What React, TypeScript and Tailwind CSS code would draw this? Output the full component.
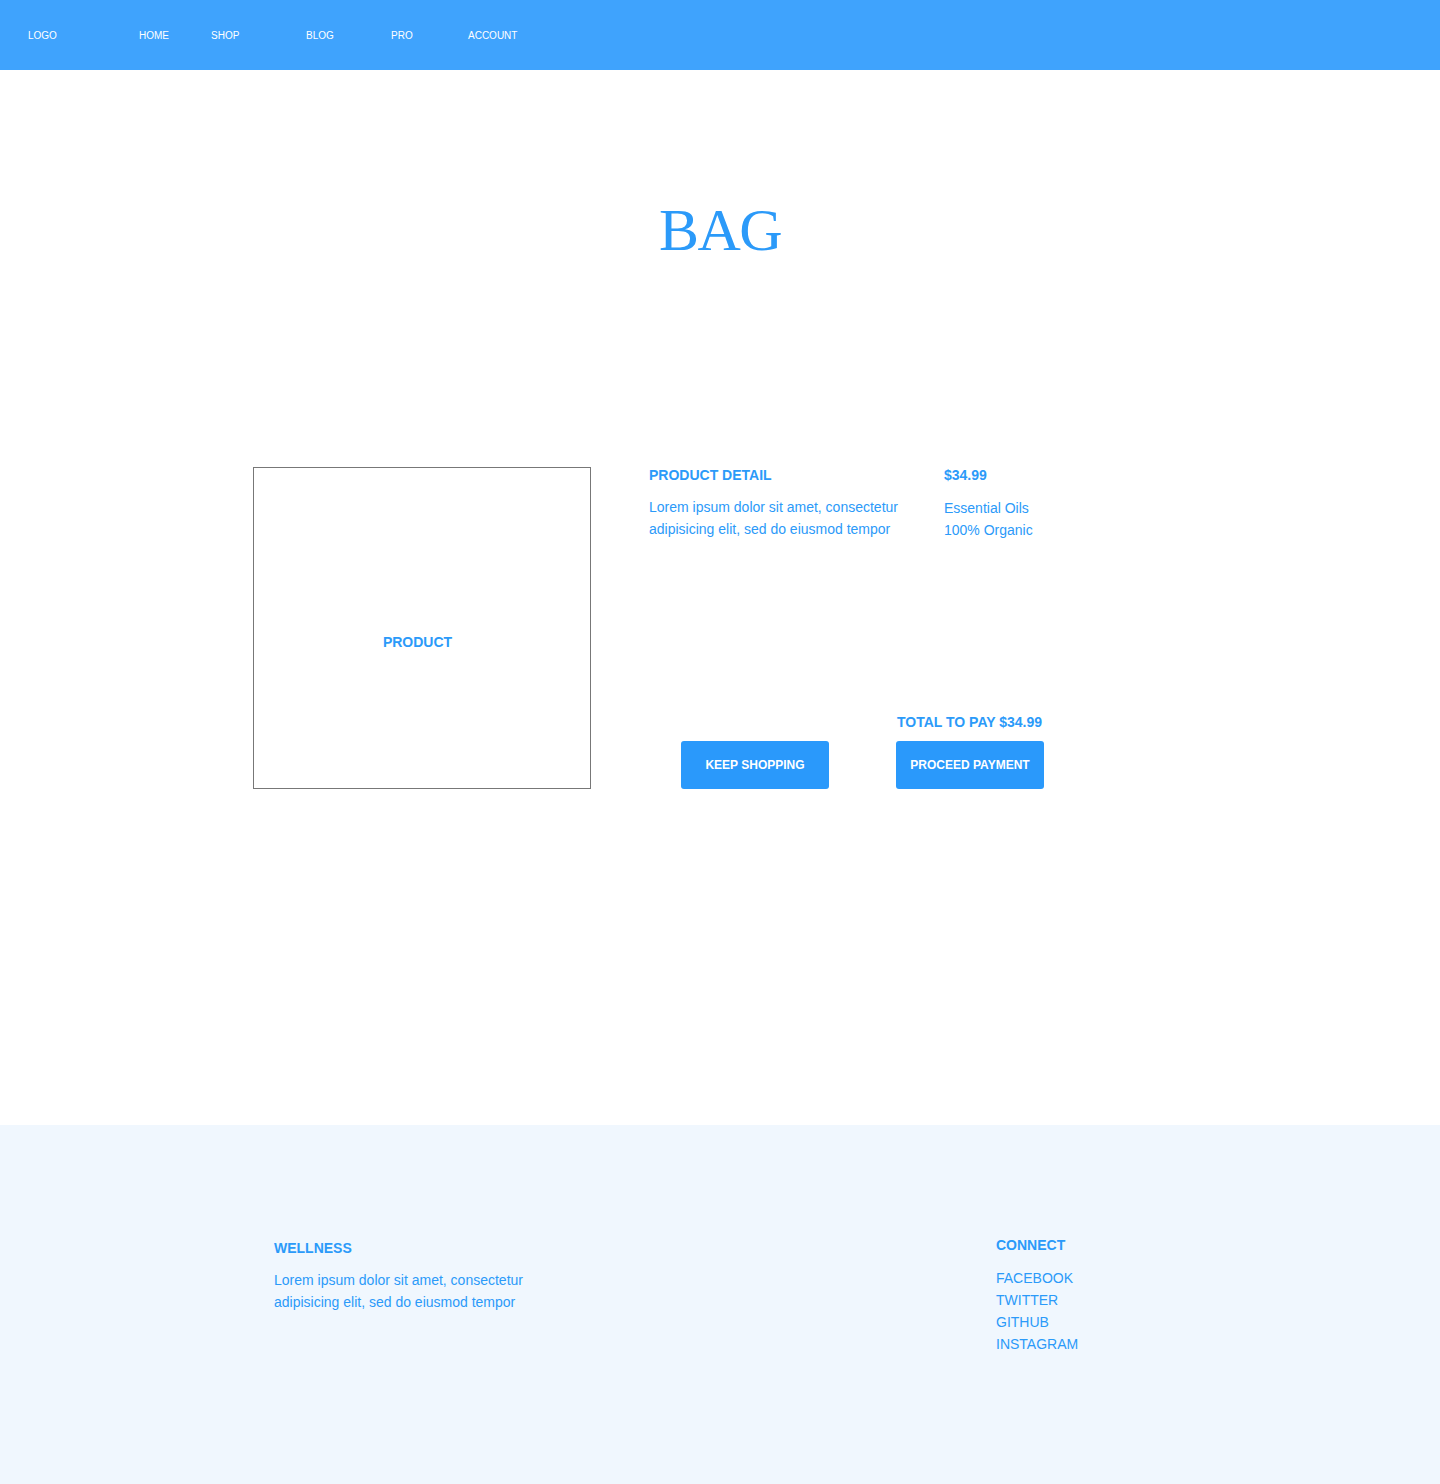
import React from "react";

const navItems = [
  { label: "LOGO", w: "w-[111px]" },
  { label: "HOME", w: "w-[72px]" },
  { label: "SHOP", w: "w-[95px]" },
  { label: "BLOG", w: "w-[85px]" },
  { label: "PRO", w: "w-[77px]" },
  { label: "ACCOUNT", w: "w-[90px]" },
];

const socials = ["FACEBOOK", "TWITTER", "GITHUB", "INSTAGRAM"];

const App = () => {
  return (
    <div className="min-h-[1484px] flex flex-col bg-white font-['Liberation_Sans',Arial,sans-serif] text-[#2b9af9]">
      {/* Header */}
      <header className="h-[70px] bg-[#3fa3fd] flex items-center pl-[28px] pt-[2px]">
        {navItems.map((item) => (
          <a key={item.label} className={`${item.w} text-[10px] text-white leading-none`}>
            {item.label}
          </a>
        ))}
      </header>

      {/* Title */}
      <h1 className="mt-[130px] text-center font-['Liberation_Serif','Times_New_Roman',serif] text-[60px] leading-none tracking-[-1.5px]">
        BAG
      </h1>

      {/* Bag content */}
      <section className="flex pl-[253px] mt-[207px] h-[658px]">
        <div className="w-[338px] h-[322px] border border-[#777777] flex items-center justify-center pt-[28px] pr-[9px]">
          <p className="text-[14px] font-bold">PRODUCT</p>
        </div>

        <div className="ml-[58px] h-[322px] flex flex-col justify-between">
          <div className="flex">
            <div className="w-[295px]">
              <h2 className="text-[14px] font-bold leading-[16px]">PRODUCT DETAIL</h2>
              <p className="mt-[13px] w-[260px] text-[14px] leading-[22px]">
                Lorem ipsum dolor sit amet, consectetur adipisicing elit, sed do eiusmod tempor
              </p>
            </div>
            <div>
              <p className="text-[14px] font-bold leading-[16px]">$34.99</p>
              <p className="mt-[14px] text-[14px] leading-[22px]">
                Essential Oils
                <br />
                100% Organic
              </p>
            </div>
          </div>

          <div className="flex items-end pl-[32px]">
            <button className="w-[148px] h-[48px] rounded-[3px] bg-[#2a99fb] text-white text-[12px] font-bold">
              KEEP SHOPPING
            </button>
            <div className="ml-[67px] flex flex-col">
              <p className="pl-[1px] mb-[11px] text-[14px] font-bold leading-[16px]">TOTAL TO PAY $34.99</p>
              <button className="w-[148px] h-[48px] rounded-[3px] bg-[#2a99fb] text-white text-[12px] font-bold">
                PROCEED PAYMENT
              </button>
            </div>
          </div>
        </div>
      </section>

      {/* Footer */}
      <footer className="flex-1 bg-[#f0f7fe] flex pt-[112px] pl-[274px]">
        <div className="w-[722px] mt-[3px]">
          <h3 className="text-[14px] font-bold leading-[16px]">WELLNESS</h3>
          <p className="mt-[13px] w-[260px] text-[14px] leading-[22px]">
            Lorem ipsum dolor sit amet, consectetur adipisicing elit, sed do eiusmod tempor
          </p>
        </div>
        <div>
          <h3 className="text-[14px] font-bold leading-[16px]">CONNECT</h3>
          <ul className="mt-[14px] text-[14px] leading-[22px]">
            {socials.map((s) => (
              <li key={s}>{s}</li>
            ))}
          </ul>
        </div>
      </footer>
    </div>
  );
};

export default App;
